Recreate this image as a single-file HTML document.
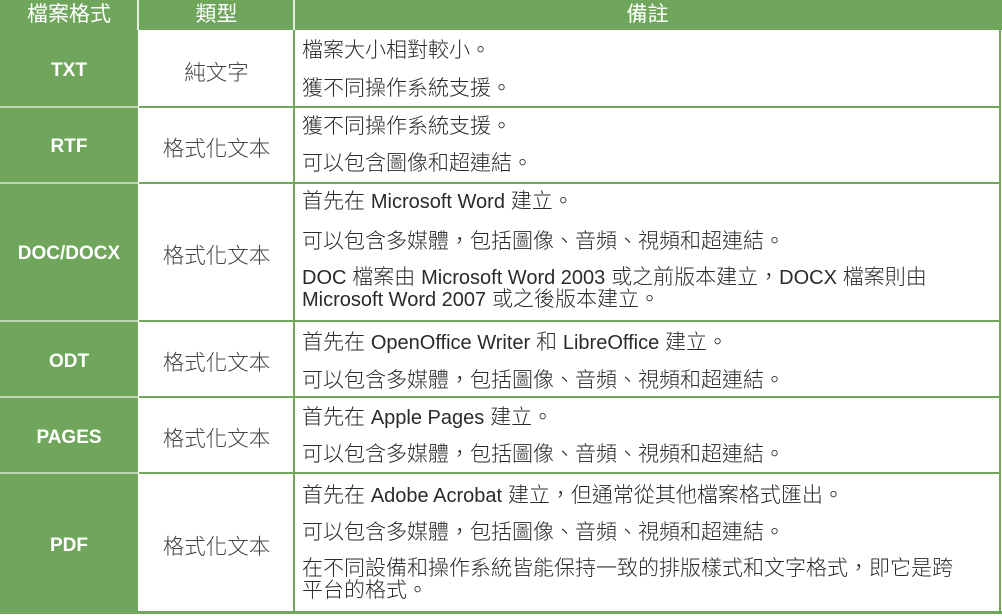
<!DOCTYPE html>
<html><head><meta charset="utf-8"><style>
body{margin:0;width:1002px;height:616px;background:#fff;position:relative;overflow:hidden;font-family:"Liberation Sans","Noto Sans CJK TC",sans-serif;}
.g{position:absolute;background:#6fa65c;}
.l{position:absolute;background:#6fa65c;}
.h{position:absolute;color:#fff;font-size:21px;text-align:center;line-height:30px;top:0px;}
.c1{position:absolute;left:0;width:138px;color:#fff;font-weight:bold;font-size:19px;text-align:center;}
.c2{position:absolute;left:139px;width:155px;color:#444;font-size:21.5px;text-align:center;font-weight:300;}
.t{position:absolute;left:302px;color:#2a2a2a;font-size:21px;line-height:22px;white-space:nowrap;font-weight:300;}
.n{font-family:"Liberation Sans Narrow","Liberation Sans",sans-serif;font-size:20px;font-weight:400;}
</style></head><body>
<div class="g" style="left:0;top:0;width:1002px;height:30px"></div>
<div class="g" style="left:0;top:30px;width:138px;height:584px"></div>
<div style="position:absolute;left:137px;top:0;width:2px;height:30px;background:#fff;opacity:.8"></div>
<div style="position:absolute;left:293px;top:0;width:2px;height:30px;background:#fff;opacity:.8"></div>
<div class="h" style="left:0;width:138px">檔案格式</div>
<div class="h" style="left:139px;width:155px">類型</div>
<div class="h" style="left:295px;width:705px">備註</div>
<div class="l" style="left:293px;top:30px;width:2px;height:584px"></div>
<div class="l" style="left:999px;top:30px;width:2px;height:584px"></div>
<div class="l" style="left:139px;top:106px;width:862px;height:2px"></div>
<div class="l" style="left:139px;top:182px;width:862px;height:2px"></div>
<div class="l" style="left:139px;top:320px;width:862px;height:2px"></div>
<div class="l" style="left:139px;top:396px;width:862px;height:2px"></div>
<div class="l" style="left:139px;top:472px;width:862px;height:2px"></div>
<div class="l" style="left:0;top:611px;width:1002px;height:3px"></div>
<div style="position:absolute;left:0;top:106px;width:138px;height:2px;background:#b9d6ae"></div>
<div style="position:absolute;left:0;top:182px;width:138px;height:2px;background:#b9d6ae"></div>
<div style="position:absolute;left:0;top:320px;width:138px;height:2px;background:#b9d6ae"></div>
<div style="position:absolute;left:0;top:396px;width:138px;height:2px;background:#b9d6ae"></div>
<div style="position:absolute;left:0;top:472px;width:138px;height:2px;background:#b9d6ae"></div>

<div class="c1" style="top:60px">TXT</div>
<div class="c1" style="top:136px">RTF</div>
<div class="c1" style="top:243px">DOC/DOCX</div>
<div class="c1" style="top:351px">ODT</div>
<div class="c1" style="top:427px">PAGES</div>
<div class="c1" style="top:535px">PDF</div>

<div class="c2" style="top:56px">純文字</div>
<div class="c2" style="top:132px">格式化文本</div>
<div class="c2" style="top:239px">格式化文本</div>
<div class="c2" style="top:346px">格式化文本</div>
<div class="c2" style="top:422px">格式化文本</div>
<div class="c2" style="top:530px">格式化文本</div>

<div class="t" style="top:40px">檔案大小相對較小。</div>
<div class="t" style="top:78px">獲不同操作系統支援。</div>
<div class="t" style="top:116px">獲不同操作系統支援。</div>
<div class="t" style="top:153px">可以包含圖像和超連結。</div>
<div class="t" style="top:191px">首先在 <span class="n">Microsoft Word</span> 建立。</div>
<div class="t" style="top:231px">可以包含多媒體，包括圖像、音頻、視頻和超連結。</div>
<div class="t" style="top:267px"><span class="n">DOC</span> 檔案由 <span class="n">Microsoft Word 2003</span> 或之前版本建立，<span class="n">DOCX</span> 檔案則由<br><span class="n">Microsoft Word 2007</span> 或之後版本建立。</div>
<div class="t" style="top:332px">首先在 <span class="n">OpenOffice Writer</span> 和 <span class="n">LibreOffice</span> 建立。</div>
<div class="t" style="top:370px">可以包含多媒體，包括圖像、音頻、視頻和超連結。</div>
<div class="t" style="top:407px">首先在 <span class="n">Apple Pages</span> 建立。</div>
<div class="t" style="top:444px">可以包含多媒體，包括圖像、音頻、視頻和超連結。</div>
<div class="t" style="top:485px">首先在 <span class="n">Adobe Acrobat</span> 建立，但通常從其他檔案格式匯出。</div>
<div class="t" style="top:522px">可以包含多媒體，包括圖像、音頻、視頻和超連結。</div>
<div class="t" style="top:558px">在不同設備和操作系統皆能保持一致的排版樣式和文字格式，即它是跨<br>平台的格式。</div>
</body></html>
